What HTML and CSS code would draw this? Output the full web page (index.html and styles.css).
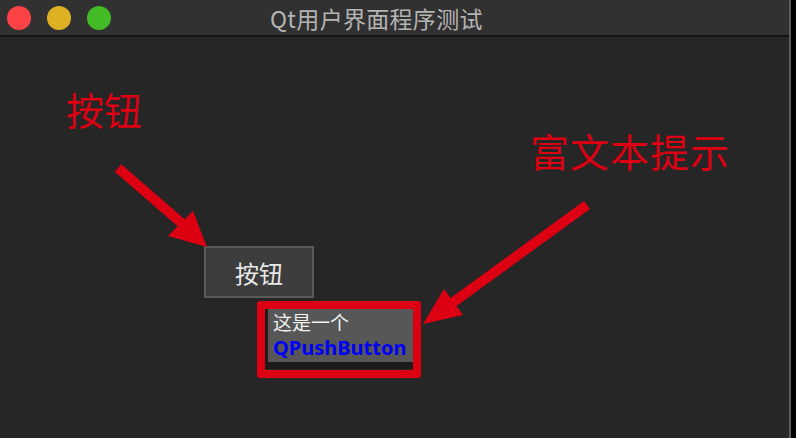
FILE: index.html
```html
<!doctype html>
<html lang="zh">
<head>
    <meta charset="UTF-8">
    <title>Qt用户界面程序测试</title>
    <link rel="stylesheet" href="styles.css">
</head>
<body>
<div class="window">
    <div class="titlebar">
        <div class="lights">
            <span class="light red"></span>
            <span class="light yellow"></span>
            <span class="light green"></span>
        </div>
        <div class="title">Qt用户界面程序测试</div>
    </div>
    <div class="content">
        <button class="push">按钮</button>
        <div class="tooltip">
            <div class="tip-line">这是一个</div>
            <div class="tip-line blue">QPushButton</div>
        </div>
    </div>

    <!-- annotations drawn over the screenshot -->
    <div class="note note-btn">按钮</div>
    <div class="note note-tip">富文本提示</div>
    <div class="frame"></div>
    <svg class="arrows" width="791" height="438" viewBox="0 0 791 438">
        <line x1="118" y1="168" x2="186" y2="227" stroke="#dc0012" stroke-width="10"/>
        <polygon points="207,247 168,236 193,211" fill="#dc0012"/>
        <line x1="587" y1="205" x2="448" y2="306" stroke="#dc0012" stroke-width="10"/>
        <polygon points="423,324 444,289 463,315" fill="#dc0012"/>
    </svg>
</div>
</body>
</html>
```

FILE: styles.css
```css
html, body {
    margin: 0;
    padding: 0;
    background: #000;
}

body {
    width: 796px;
    height: 438px;
    overflow: hidden;
    font-family: "Noto Sans CJK SC", "Noto Sans", sans-serif;
}

.window {
    position: relative;
    width: 789px;
    height: 438px;
    background: #262626;
    border-right: 2px solid #5c5c5c;
}

.titlebar {
    display: flex;
    align-items: center;
    height: 35px;
    background: #313131;
    border-bottom: 2px solid #141414;
}

.lights {
    display: flex;
    gap: 16px;
    padding-left: 7px;
    width: 263px;
}

.light {
    width: 24px;
    height: 24px;
    border-radius: 50%;
}

.red { background: #fc4244; }
.yellow { background: #deb023; }
.green { background: #42bb26; }

.title {
    color: #b4b4b4;
    font-size: 23px;
    letter-spacing: 0.3px;
}

.content {
    padding: 209px 0 0 204px;
}

.push {
    display: block;
    width: 110px;
    height: 52px;
    margin: 0;
    background: #3c3c3c;
    border: 2px solid #5a5a5a;
    color: #e8e8e8;
    font-family: inherit;
    font-size: 24px;
    padding: 0;
}

.tooltip {
    width: 140px;
    margin: 11px 0 0 61px;
    padding: 0 0 1px 5px;
    background: #575757;
    border-left: 3px solid #1c1c1c;
    border-bottom: 7px solid #1c1c1c;
}

.tip-line {
    color: #f0f0f0;
    font-size: 19px;
    line-height: 26px;
    white-space: nowrap;
}

.blue {
    color: #0000f5;
    font-family: "Noto Sans", sans-serif;
    font-weight: bold;
    font-size: 20px;
}

.note {
    position: absolute;
    color: #dc0012;
    line-height: 1;
}

.note-btn {
    left: 66px;
    top: 90px;
    font-size: 38px;
}

.note-tip {
    left: 530px;
    top: 131px;
    font-size: 39px;
    letter-spacing: 1px;
}

.frame {
    position: absolute;
    left: 257px;
    top: 301px;
    width: 148px;
    height: 61px;
    border: 8px solid #dc0012;
    border-radius: 3px;
}

.arrows {
    position: absolute;
    left: 0;
    top: 0;
}
```
